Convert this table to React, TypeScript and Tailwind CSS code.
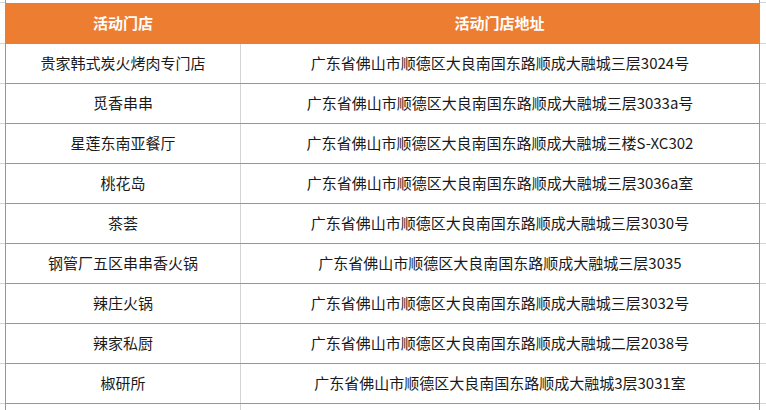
const rows: [string, string][] = [
  ["贵家韩式炭火烤肉专门店", "广东省佛山市顺德区大良南国东路顺成大融城三层3024号"],
  ["觅香串串", "广东省佛山市顺德区大良南国东路顺成大融城三层3033a号"],
  ["星莲东南亚餐厅", "广东省佛山市顺德区大良南国东路顺成大融城三楼S-XC302"],
  ["桃花岛", "广东省佛山市顺德区大良南国东路顺成大融城三层3036a室"],
  ["茶荟", "广东省佛山市顺德区大良南国东路顺成大融城三层3030号"],
  ["钢管厂五区串串香火锅", "广东省佛山市顺德区大良南国东路顺成大融城三层3035"],
  ["辣庄火锅", "广东省佛山市顺德区大良南国东路顺成大融城三层3032号"],
  ["辣家私厨", "广东省佛山市顺德区大良南国东路顺成大融城二层2038号"],
  ["椒研所", "广东省佛山市顺德区大良南国东路顺成大融城3层3031室"],
];

export default function App() {
  return (
    <div
      className="flex h-[410px] w-[766px] flex-col overflow-hidden bg-white text-[15px] text-[#1a1a1a]"
      style={{ fontFamily: '"Noto Sans CJK SC", "Noto Sans", sans-serif' }}
    >
      {/* top strip */}
      <div className="flex h-[3px]">
        <div className="w-[5px] border-b border-[#d4d4d4]" />
        <div className="w-[755px] border-x border-[#ed7d31]" />
        <div className="flex-1 border-b border-[#d4d4d4]" />
      </div>

      {/* header */}
      <div className="flex h-[41px]">
        <div className="w-[5px] border-b border-[#d4d4d4]" />
        <div className="flex w-[755px] border-x border-[#ed7d31] bg-[#ed7d31] font-bold text-white">
          <div className="flex w-[234px] items-center justify-center">活动门店</div>
          <div className="flex flex-1 items-center justify-center">活动门店地址</div>
        </div>
        <div className="flex-1 border-b border-[#d4d4d4]" />
      </div>

      {rows.map(([name, addr]) => (
        <div key={name} className="flex h-[40px]">
          <div className="w-[5px] border-b border-[#d4d4d4]" />
          <div className="flex w-[755px] border-x border-b border-[#ed7d31]">
            <div className="flex w-[235px] items-center justify-center border-r border-[#d4d4d4]">
              {name}
            </div>
            <div className="flex flex-1 items-center justify-center">{addr}</div>
          </div>
          <div className="flex-1 border-b border-[#d4d4d4]" />
        </div>
      ))}

      {/* bottom strip */}
      <div className="flex flex-1">
        <div className="w-[5px]" />
        <div className="flex w-[755px] border-x border-[#ed7d31]">
          <div className="w-[235px] border-r border-[#d4d4d4]" />
        </div>
        <div className="flex-1" />
      </div>
    </div>
  );
}
